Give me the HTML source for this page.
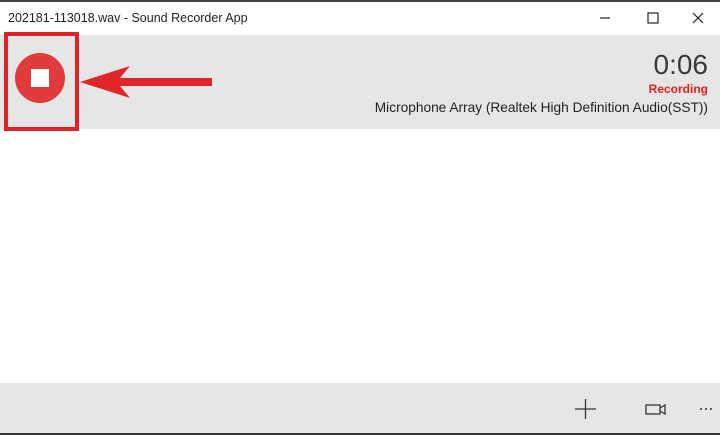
<!DOCTYPE html><html><head><style>
body{margin:0;width:720px;height:435px;overflow:hidden;background:#fff;font-family:"Liberation Sans",sans-serif;position:relative}
.a{position:absolute}
</style></head><body>
<div class="a" style="left:0;top:0;width:720px;height:2px;background:#444"></div>
<div class="a" style="left:8px;top:11px;font-size:12.5px;color:#222">202181-113018.wav - Sound Recorder App</div>
<svg class="a" style="left:590px;top:8px" width="125" height="22"><g stroke="#222" stroke-width="1.2" fill="none"><line x1="10" y1="10" x2="20" y2="10"/><rect x="58" y="5" width="10" height="10"/><line x1="103" y1="5" x2="113" y2="15"/><line x1="113" y1="5" x2="103" y2="15"/></g></svg>
<div class="a" style="left:0;top:35px;width:720px;height:94px;background:#e6e6e6"></div>
<div class="a" style="left:4px;top:32px;width:67px;height:91px;border:4px solid #dd2228"></div>
<div class="a" style="left:15px;top:53px;width:50px;height:50px;border-radius:50%;background:#e03c3c"></div>
<div class="a" style="left:31px;top:69px;width:18px;height:18px;background:#fff"></div>
<svg class="a" style="left:78px;top:62px" width="140" height="42"><polygon points="2,20 52,4 42,16 134,16 134,24 42,24 52,36" fill="#e0262b"/></svg>
<div class="a" style="right:12px;top:49px;font-size:28px;color:#3a3a3a">0:06</div>
<div class="a" style="right:12px;top:82px;font-size:12px;font-weight:bold;color:#e02020">Recording</div>
<div class="a" style="right:12px;top:100px;font-size:13.7px;color:#222">Microphone Array (Realtek High Definition Audio(SST))</div>
<div class="a" style="left:0;top:383px;width:720px;height:50px;background:#e6e6e6"></div>
<div class="a" style="left:0;top:433px;width:720px;height:2px;background:#333"></div>
<svg class="a" style="left:570px;top:395px" width="150" height="28"><g stroke="#333" stroke-width="1.3" fill="none"><line x1="5" y1="14" x2="26" y2="14"/><line x1="15.5" y1="4" x2="15.5" y2="24"/><rect x="76" y="10" width="14" height="9"/><path d="M90 13 L95 10 V19 L90 16"/></g><g fill="#333"><circle cx="131" cy="14" r="1"/><circle cx="136" cy="14" r="1"/><circle cx="141" cy="14" r="1"/></g></svg>
</body></html>
